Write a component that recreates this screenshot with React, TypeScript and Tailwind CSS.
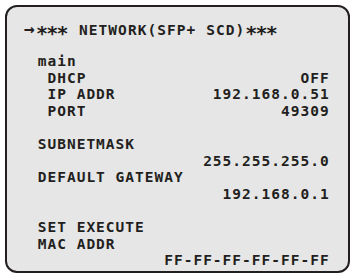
const COLS = 31;

const row = (left: string, right = "") =>
  left + " ".repeat(Math.max(1, COLS - left.length - right.length)) + right;

const lines = [
  "",
  row(" main"),
  row("  DHCP", "OFF"),
  row("  IP ADDR", "192.168.0.51"),
  row("  PORT", "49309"),
  "",
  row(" SUBNETMASK"),
  row("", "255.255.255.0"),
  row(" DEFAULT GATEWAY"),
  row("", "192.168.0.1"),
  "",
  row(" SET EXECUTE"),
  row(" MAC ADDR"),
  row("", "FF-FF-FF-FF-FF-FF"),
];

function Stars() {
  return (
    <span className="inline-block w-[33px] translate-y-[5px] text-[20px] tracking-[-1.8px]">
      ***
    </span>
  );
}

export default function App() {
  return (
    <div className="w-[355px] h-[278px] bg-white p-[5px]">
      <div className="h-full rounded-[12px] border-2 border-[#231f20] bg-[#e6e6e6] pt-[13px] pl-[21px]">
        <div className="font-['DejaVu_Sans_Mono',monospace] font-bold text-[14.5px] leading-[16.6px] tracking-[1px] text-[#231f20] whitespace-pre">
          <div className="h-[16.6px] -ml-[4px] flex items-baseline">
            <span className="inline-block w-[12px] text-[18px] tracking-normal">→</span>
            <Stars />
            <span className="pl-[10px] tracking-[1.05px]">NETWORK(SFP+ SCD)</span>
            <Stars />
          </div>
          {lines.map((l, i) => (
            <div key={i} className="h-[16.6px]">
              {l}
            </div>
          ))}
        </div>
      </div>
    </div>
  );
}
